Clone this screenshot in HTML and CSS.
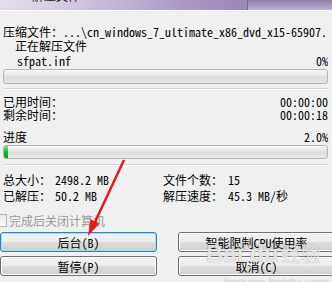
FILE: index.html
```html
<!DOCTYPE html>
<html lang="zh-CN">
<head>
    <meta charset="UTF-8">
    <title>正在解压</title>
    <link rel="stylesheet" href="styles.css">
</head>
<body>
    <div class="window">
        <!-- Title bar (mostly cropped) -->
        <div class="titlebar">
            <span class="title">解压文件</span>
            <span class="caption"></span>
        </div>

        <div class="content">
            <div class="row">压缩文件：...\cn_windows_7_ultimate_x86_dvd_x15-65907.</div>
            <div class="row status">正在解压文件</div>
            <div class="row current split">
                <span>sfpat.inf</span>
                <span>0%</span>
            </div>
            <div class="progress"><div class="fill" style="width: 0px"></div></div>

            <div class="sep"></div>

            <div class="row times split first">
                <span>已用时间：</span>
                <span>00:00:00</span>
            </div>
            <div class="row times split">
                <span>剩余时间：</span>
                <span>00:00:18</span>
            </div>
            <div class="row split total-label">
                <span>进度</span>
                <span>2.0%</span>
            </div>
            <div class="progress thin"><div class="fill" style="width: 4px"></div></div>

            <div class="sep"></div>

            <!-- Totals -->
            <div class="stats">
                <span>总大小：</span><span>2498.2 MB</span>
                <span>文件个数：</span><span>15</span>
                <span>已解压：</span><span>50.2 MB</span>
                <span>解压速度：</span><span>45.3 MB/秒</span>
            </div>

            <label class="check">
                <span class="box"></span>
                <span>完成后关闭计算机</span>
            </label>

            <div class="buttons">
                <button class="btn default">后台(B)</button>
                <button class="btn">智能限制CPU使用率</button>
                <button class="btn">暂停(P)</button>
                <button class="btn">取消(C)</button>
            </div>
        </div>

        <!-- Watermark -->
        <div class="watermark">
            <span class="brand">Bai<span class="paw">●</span>du</span><span class="jy">经验</span>
            <div class="url">jingyan.baidu.com</div>
        </div>

        <!-- Red annotation arrow -->
        <svg class="arrow" width="332" height="282" viewBox="0 0 332 282">
            <line x1="124" y1="160" x2="95" y2="222" stroke="#e31b1b" stroke-width="2.5"/>
            <polygon points="88,236 90.4,219.3 99.4,223.6" fill="#e31b1b"/>
        </svg>
    </div>
</body>
</html>
```

FILE: styles.css
```css
/* Page */
body {
    margin: 0;
    background: #f0f0f0;
    font-family: "Noto Sans Mono CJK SC", "Noto Sans CJK SC", monospace;
    font-size: 12px;
    color: #000;
}

.window {
    position: relative;
    width: 332px;
    height: 282px;
    overflow: hidden;
}

/* Title bar */
.titlebar {
    display: flex;
    height: 10px;
    overflow: hidden;
    background: linear-gradient(to right, #e2dcea 0%, #d4cbe2 20%, #a999c2 55%, #9a89b6 74%);
    border-bottom: 1px solid #fbfbfd;
}

.title {
    margin: -12px 0 0 32px;
    line-height: 16px;
    color: #222;
}

.caption {
    margin-left: auto;
    width: 84px;
    background: linear-gradient(#8f7fae, #bdb0d3);
    border-left: 1px solid #776796;
}

/* Main area */
.content {
    padding: 14px 4px 0 3px;
}

.row {
    height: 14px;
    line-height: 14px;
    white-space: nowrap;
}

.split {
    display: flex;
    justify-content: space-between;
}

.status {
    padding-left: 12px;
}

.current {
    margin-top: 1px;
    padding-left: 14px;
}

.times {
    height: 13px;
    line-height: 13px;
}

.times.first {
    margin-top: 6px;
}

.total-label {
    margin-top: 9px;
}

/* Progress bars */
.progress {
    margin-top: 1px;
    height: 13px;
    border: 1px solid #b4b4b4;
    border-radius: 3px;
    background: linear-gradient(#f6f6f6, #e6e6e6 45%, #dadada 55%, #eaeaea);
    box-shadow: inset 0 1px 0 #fff;
    overflow: hidden;
}

.progress.thin {
    height: 12px;
}

.fill {
    height: 100%;
    background: linear-gradient(#7be07b, #1fb32a 50%, #0a9a1a);
}

.sep {
    margin-top: 4px;
    border-top: 1px solid #d5d5d5;
    border-bottom: 1px solid #fff;
}

.sep + .row,
.progress.thin + .sep {
    margin-top: 5px;
}

/* Totals grid */
.stats {
    display: grid;
    grid-template-columns: 52px 108px 65px auto;
    margin-top: 6px;
    line-height: 16px;
    white-space: nowrap;
}

/* Disabled checkbox */
.check {
    display: flex;
    align-items: center;
    gap: 2px;
    margin: 9px 0 0 -9px;
    height: 14px;
    color: #9a9a9a;
}

.box {
    width: 11px;
    height: 11px;
    border: 1px solid #b8b8b8;
    background: linear-gradient(#ececec, #fafafa);
}

/* Buttons */
.buttons {
    display: grid;
    grid-template-columns: 157px 157px;
    column-gap: 21px;
    row-gap: 4px;
    margin: 5px 0 0 -3px;
}

.btn {
    height: 20px;
    padding: 0;
    font: inherit;
    color: #000;
    border: 1px solid #707070;
    border-radius: 3px;
    background: linear-gradient(#f2f2f2, #ebebeb 50%, #dddddd 51%, #cfcfcf);
    box-shadow: inset 0 0 0 1px #fcfcfc;
}

.btn.default {
    border-color: #3c7fb1;
    box-shadow: inset 0 0 0 1px #9edcf4;
}

/* Watermark */
.watermark {
    position: absolute;
    left: 206px;
    top: 232px;
    color: rgba(255, 255, 255, 0.75);
    text-shadow: 0 0 1px rgba(110, 110, 110, 0.7);
    pointer-events: none;
}

.brand {
    font-family: "Liberation Sans", sans-serif;
    font-weight: bold;
    font-size: 24px;
    line-height: 30px;
}

.paw {
    font-size: 10px;
    vertical-align: 12px;
}

.jy {
    font-family: "Noto Sans CJK SC", sans-serif;
    font-size: 20px;
    margin-left: 2px;
}

.url {
    margin: 6px 0 0 18px;
    font-family: "Liberation Sans", sans-serif;
    font-size: 13px;
}

/* Annotation */
.arrow {
    position: absolute;
    left: 0;
    top: 0;
    pointer-events: none;
}
```
